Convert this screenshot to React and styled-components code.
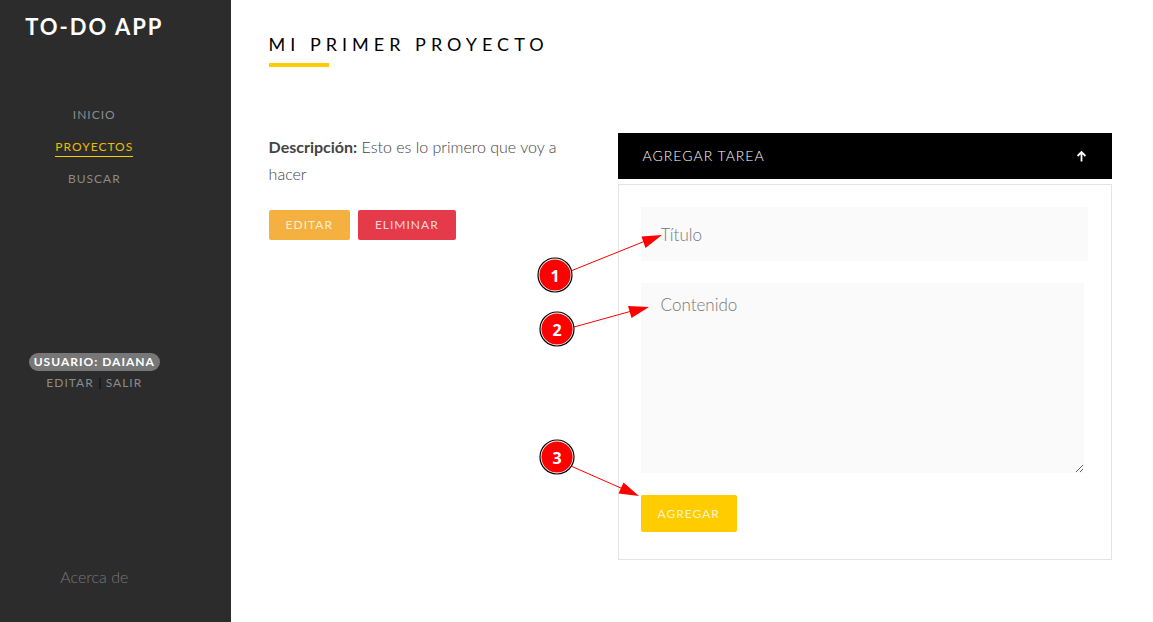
import React from "react";
import styled, { createGlobalStyle, css } from "styled-components";

const GlobalStyle = createGlobalStyle`
  *, *::before, *::after { box-sizing: border-box; }
  body {
    margin: 0;
    background: #fff;
    color: #444;
    font-family: Lato, "Open Sans", sans-serif;
    font-size: 16px;
    line-height: 27px;
  }
  button, input, textarea { font-family: inherit; }
`;

const Page = styled.div`
  display: grid;
  grid-template-columns: 1fr 4fr;
  min-height: 100vh;
`;

const Sidebar = styled.aside`
  display: flex;
  flex-direction: column;
  align-items: center;
  padding: 12px 42px 31px 0;
  background: #2c2c2c;
`;

const Brand = styled.a`
  color: #fff;
  font-size: 22px;
  font-weight: 700;
  line-height: 29px;
  letter-spacing: 2px;
  text-decoration: none;
  white-space: nowrap;
`;

const Nav = styled.nav`
  display: flex;
  flex-direction: column;
  align-items: center;
  gap: 13px;
  margin-top: 65px;
`;

const SideLink = styled.a`
  border-bottom: 1px solid transparent;
  color: #8b8b8b;
  font-size: 12px;
  line-height: 18px;
  letter-spacing: 1px;
  text-decoration: none;
  ${({ $active }) => $active && css`
    border-color: #ffcc00;
    color: #ebbd05;
  `}
`;

const User = styled.div`
  display: flex;
  flex-direction: column;
  align-items: center;
  gap: 3px;
  margin-top: 164px;
`;

const UserBadge = styled.span`
  padding: 0 5px;
  border-radius: 9px;
  background: #777;
  color: #fff;
  font-size: 12px;
  font-weight: 700;
  line-height: 18px;
  letter-spacing: 1px;
  white-space: nowrap;
`;

const UserLinks = styled.div`
  display: flex;
  align-items: center;
  gap: 5px;
`;

const Divider = styled.span`
  width: 2px;
  height: 11px;
  background: #1c1c1c;
`;

const AboutLink = styled.a`
  margin-top: auto;
  color: #777;
  font-size: 16px;
  font-weight: 300;
  line-height: 28px;
  text-decoration: none;
`;

const Main = styled.main`
  padding: 31px 41px 60px 38px;
`;

const Heading = styled.h1`
  margin: 0 0 66px;
  color: #000;
  font-size: 18px;
  font-weight: 400;
  line-height: 26px;
  letter-spacing: 5px;

  &::after {
    content: "";
    display: block;
    width: 60px;
    height: 4px;
    margin-top: 6px;
    background: #ffcc00;
  }
`;

const Columns = styled.div`
  display: grid;
  grid-template-columns: 5fr 8fr;
  gap: 40px;
  align-items: start;
`;

const Description = styled.p`
  margin: 0 0 23px;
  font-weight: 300;

  strong { font-weight: 700; }
`;

const Actions = styled.div`
  display: flex;
  gap: 8px;
`;

const tones = { edit: "#f4b140", remove: "#e43a4a", primary: "#ffcc00" };

const Button = styled.button`
  height: ${({ $large }) => ($large ? 37 : 30)}px;
  padding: 0 17px;
  border: 0;
  border-radius: 2px;
  background: ${({ $tone }) => tones[$tone]};
  color: rgba(255, 255, 255, 0.8);
  font-size: 12px;
  line-height: 18px;
  letter-spacing: 1px;
`;

const Panel = styled.section`
  position: relative;
`;

const PanelToggle = styled.button`
  display: flex;
  align-items: center;
  justify-content: space-between;
  width: 100%;
  height: 46px;
  padding: 0 25px;
  border: 0;
  background: #000;
  color: #fff;
  font-size: 14px;
  font-weight: 300;
  line-height: 20px;
  letter-spacing: 1px;
`;

const Form = styled.form`
  display: flex;
  flex-direction: column;
  align-items: flex-start;
  gap: 22px;
  margin-top: 5px;
  padding: 22px 23px 27px 22px;
  border: 1px solid #e4e4e4;
`;

const field = css`
  display: block;
  border: 0;
  border-radius: 0;
  background: #fafafa;
  color: #444;
  font-size: 17px;
  font-weight: 300;
  line-height: 24px;
  &::placeholder { color: #777; opacity: 1; }
`;

const TextInput = styled.input`
  ${field}
  width: 100%;
  height: 54px;
  padding: 0 20px;
`;

const TextArea = styled.textarea`
  ${field}
  width: 99%;
  height: 190px;
  padding: 10px 20px;
  resize: both;
`;

const Callouts = styled.svg`
  position: absolute;
  top: 0;
  left: -81px;
  width: 131px;
  height: 370px;
  pointer-events: none;

  text {
    fill: #fff;
    font: 700 16px "Open Sans", sans-serif;
    text-anchor: middle;
  }
`;

function Callout({ number, x, y, line, head }) {
  return (
    <g>
      <path d={line} stroke="#f00" strokeWidth="1" fill="none" />
      <path d={head} fill="#f00" />
      <circle cx={x} cy={y} r="17" fill="#fff" stroke="#000" strokeWidth="1.2" />
      <circle cx={x} cy={y} r="15.6" fill="#f00" />
      <text x={x} y={y + 7}>{number}</text>
    </g>
  );
}

export default function App() {
  return (
    <>
      <GlobalStyle />
      <Page>
        <Sidebar>
          <Brand href="#">TO-DO APP</Brand>
          <Nav>
            <SideLink href="#inicio">INICIO</SideLink>
            <SideLink href="#proyectos" $active aria-current="page">PROYECTOS</SideLink>
            <SideLink href="#buscar">BUSCAR</SideLink>
          </Nav>
          <User>
            <UserBadge>USUARIO: DAIANA</UserBadge>
            <UserLinks>
              <SideLink href="#perfil">EDITAR</SideLink>
              <Divider />
              <SideLink href="#salir">SALIR</SideLink>
            </UserLinks>
          </User>
          <AboutLink href="#acerca">Acerca de</AboutLink>
        </Sidebar>
        <Main>
          <Heading>MI PRIMER PROYECTO</Heading>
          <Columns>
            <section>
              <Description>
                <strong>Descripción:</strong> Esto es lo primero que voy a hacer
              </Description>
              <Actions>
                <Button type="button" $tone="edit">EDITAR</Button>
                <Button type="button" $tone="remove">ELIMINAR</Button>
              </Actions>
            </section>
            <Panel>
              <PanelToggle type="button" aria-expanded="true">
                AGREGAR TAREA
                <svg width="11" height="12" viewBox="0 0 11 12" fill="none" stroke="#fff" strokeWidth="1.8" aria-hidden="true">
                  <path d="M5.5 11.5V2M1.6 6L5.5 2.1L9.4 6" />
                </svg>
              </PanelToggle>
              <Form>
                <TextInput type="text" placeholder="Título" aria-label="Título" />
                <TextArea placeholder="Contenido" aria-label="Contenido" />
                <Button type="button" $tone="primary" $large>AGREGAR</Button>
              </Form>
              <Callouts viewBox="-1 0 131 370" aria-hidden="true">
                <Callout number="1" x={17} y={142} line="M34 137.5L106 108.5" head="M124 102L103.5 103.5L107.5 115Z" />
                <Callout number="2" x={19} y={196} line="M36 194L92 178.5" head="M111 174L90 173L93.5 185Z" />
                <Callout number="3" x={19} y={324} line="M34 333.5L84 355.5" head="M101 363L85.5 349.5L80.5 360.5Z" />
              </Callouts>
            </Panel>
          </Columns>
        </Main>
      </Page>
    </>
  );
}
